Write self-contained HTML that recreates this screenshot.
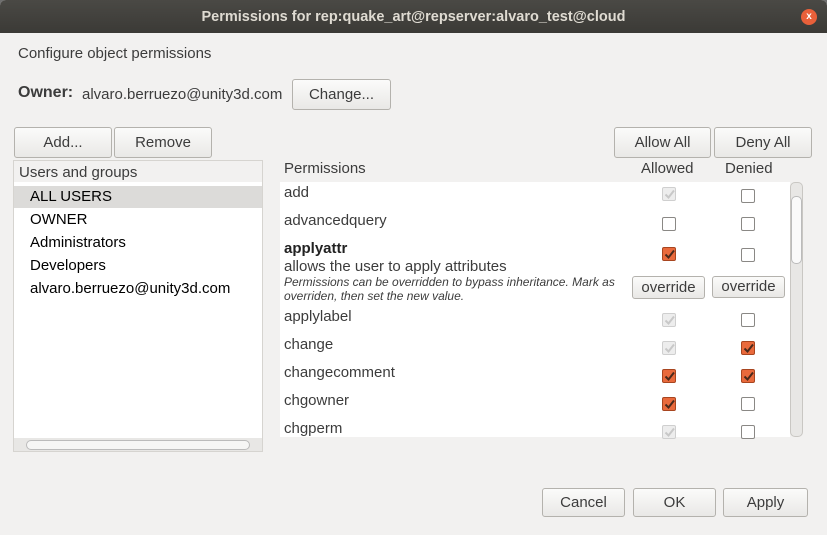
<!DOCTYPE html><html><head><style>
body{margin:0;width:827px;height:535px;overflow:hidden;background:#6e6e6e;font-family:"Liberation Sans","DejaVu Sans",sans-serif;font-size:15px;color:#3c3c3c}
.win{position:absolute;left:0;top:0;width:827px;height:535px;background:#f2f1f0;border-radius:6px 6px 0 0;overflow:hidden}
.tb{position:absolute;left:0;top:0;width:827px;height:33px;background:linear-gradient(#4a4945,#3b3a36);color:#dfdbd2;font-size:14.5px;font-weight:bold;text-align:center;line-height:34px}
.x{position:absolute;right:10px;top:9px;width:16px;height:16px;border-radius:50%;background:#e8603a;color:#fff;font-size:10px;line-height:16px;text-align:center}
.a{position:absolute;white-space:nowrap}
.btn{position:absolute;border:1px solid #b4b2ad;border-radius:3px;background:linear-gradient(#fbfbfa,#e9e8e6);text-align:center;box-sizing:border-box;color:#3c3c3c}
.cb{position:absolute;width:12px;height:12px;border:1px solid #8a8885;border-radius:2px;background:#fff;box-sizing:content-box}
.cb.on{background:#e96a3c;border-color:#a8451f}
.cb.dis{background:#ededed;border-color:#cfcfcf}
.cb svg{position:absolute;left:0;top:0}
</style></head><body><div class="win">
<div class="tb">Permissions for rep:quake_art@repserver:alvaro_test@cloud<div class="x">x</div></div>
<div class="a" style="left:18px;top:45px">Configure object permissions</div>
<div class="a" style="left:18px;top:84px;font-weight:bold;font-size:16px">Owner:</div>
<div class="a" style="left:82px;top:86px">alvaro.berruezo@unity3d.com</div>
<div class="btn" style="left:292px;top:79px;width:99px;height:31px;line-height:29px">Change...</div>
<div class="btn" style="left:14px;top:127px;width:98px;height:31px;line-height:29px">Add...</div>
<div class="btn" style="left:114px;top:127px;width:98px;height:31px;line-height:29px">Remove</div>
<div class="btn" style="left:614px;top:127px;width:97px;height:31px;line-height:29px">Allow All</div>
<div class="btn" style="left:714px;top:127px;width:98px;height:31px;line-height:29px">Deny All</div>
<div class="a" style="left:13px;top:160px;width:250px;height:292px;background:#fff;border:1px solid #d6d4d0;box-sizing:border-box"></div>
<div class="a" style="left:14px;top:161px;width:248px;height:21px;background:#f2f1f0"></div>
<div class="a" style="left:19px;top:164px">Users and groups</div>
<div class="a" style="left:14px;top:186px;width:248px;height:22px;background:#dcdbd9"></div>
<div class="a" style="left:30px;top:188px;color:#000">ALL USERS</div>
<div class="a" style="left:30px;top:211px;color:#000">OWNER</div>
<div class="a" style="left:30px;top:234px;color:#000">Administrators</div>
<div class="a" style="left:30px;top:257px;color:#000">Developers</div>
<div class="a" style="left:30px;top:280px;color:#000">alvaro.berruezo@unity3d.com</div>
<div class="a" style="left:14px;top:438px;width:248px;height:13px;background:#e8e7e5"></div>
<div class="a" style="left:26px;top:440px;width:222px;height:8px;background:#f6f6f5;border:1px solid #bbb;border-radius:5px"></div>
<div class="a" style="left:284px;top:160px">Permissions</div>
<div class="a" style="left:641px;top:160px">Allowed</div>
<div class="a" style="left:725px;top:160px">Denied</div>
<div class="a" style="left:280px;top:182px;width:510px;height:255px;background:#fff"></div>
<div class="a" style="left:790px;top:182px;width:13px;height:255px;background:#e8e7e5;border:1px solid #c9c7c3;border-radius:5px;box-sizing:border-box"></div>
<div class="a" style="left:791px;top:196px;width:11px;height:68px;background:#fafafa;border:1px solid #bbb;border-radius:5px;box-sizing:border-box"></div>
<div class="a" style="left:284px;top:184px">add</div>
<div class="a" style="left:284px;top:212px">advancedquery</div>
<div class="a" style="left:284px;top:240px;font-weight:bold;color:#222">applyattr</div>
<div class="a" style="left:284px;top:258px">allows the user to apply attributes</div>
<div class="a" style="left:284px;top:275px;font-style:italic;font-size:12px;line-height:14px">Permissions can be overridden to bypass inheritance. Mark as<br>overriden, then set the new value.</div>
<div class="btn" style="left:632px;top:276px;width:73px;height:23px;line-height:21px;font-size:15px">override</div>
<div class="btn" style="left:712px;top:276px;width:73px;height:22px;line-height:20px;font-size:15px">override</div>
<div class="a" style="left:284px;top:308px">applylabel</div>
<div class="a" style="left:284px;top:336px">change</div>
<div class="a" style="left:284px;top:364px">changecomment</div>
<div class="a" style="left:284px;top:392px">chgowner</div>
<div class="a" style="left:284px;top:420px">chgperm</div>
<svg width="0" height="0" style="position:absolute"><defs><path id="ck" d="M2.5 6.5 L5.5 9.5 L11 2.5" fill="none" stroke-width="2"/></defs></svg>
<div class="cb dis" style="left:662px;top:187px"><svg width="13" height="13"><use href="#ck" stroke="#c8c8c8"/></svg></div>
<div class="cb" style="left:741px;top:189px"></div>
<div class="cb" style="left:662px;top:217px"></div>
<div class="cb" style="left:741px;top:217px"></div>
<div class="cb on" style="left:662px;top:247px"><svg width="13" height="13"><use href="#ck" stroke="#4a2a1c"/></svg></div>
<div class="cb" style="left:741px;top:248px"></div>
<div class="cb dis" style="left:662px;top:313px"><svg width="13" height="13"><use href="#ck" stroke="#c8c8c8"/></svg></div>
<div class="cb" style="left:741px;top:313px"></div>
<div class="cb dis" style="left:662px;top:341px"><svg width="13" height="13"><use href="#ck" stroke="#c8c8c8"/></svg></div>
<div class="cb on" style="left:741px;top:341px"><svg width="13" height="13"><use href="#ck" stroke="#4a2a1c"/></svg></div>
<div class="cb on" style="left:662px;top:369px"><svg width="13" height="13"><use href="#ck" stroke="#4a2a1c"/></svg></div>
<div class="cb on" style="left:741px;top:369px"><svg width="13" height="13"><use href="#ck" stroke="#4a2a1c"/></svg></div>
<div class="cb on" style="left:662px;top:397px"><svg width="13" height="13"><use href="#ck" stroke="#4a2a1c"/></svg></div>
<div class="cb" style="left:741px;top:397px"></div>
<div class="cb dis" style="left:662px;top:425px"><svg width="13" height="13"><use href="#ck" stroke="#c8c8c8"/></svg></div>
<div class="cb" style="left:741px;top:425px"></div>
<div class="btn" style="left:542px;top:488px;width:83px;height:29px;line-height:27px">Cancel</div>
<div class="btn" style="left:633px;top:488px;width:83px;height:29px;line-height:27px">OK</div>
<div class="btn" style="left:723px;top:488px;width:85px;height:29px;line-height:27px">Apply</div>
</div></body></html>
